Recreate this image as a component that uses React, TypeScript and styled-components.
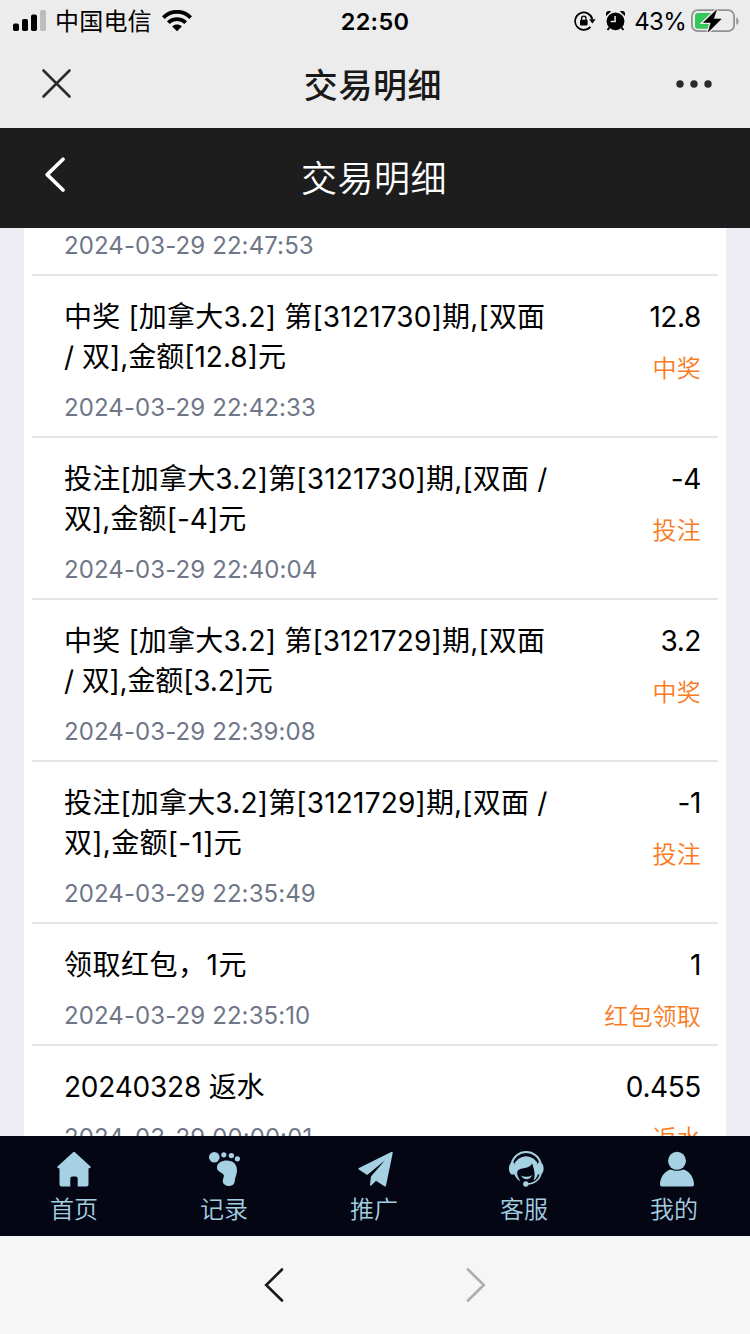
import React from "react";
import styled, { createGlobalStyle } from "styled-components";

const Global = createGlobalStyle`
  * { box-sizing: border-box; }
  body { margin: 0; background: #f6f6f6; }
`;

const Screen = styled.div`
  width: 750px;
  height: 1334px;
  display: flex;
  flex-direction: column;
  overflow: hidden;
  font-family: Inter, "Noto Sans CJK SC", sans-serif;
  background: #f6f6f6;
`;

const StatusBar = styled.header`
  height: 40px;
  flex: none;
  display: grid;
  grid-template-columns: 1fr auto 1fr;
  align-items: center;
  padding: 0 11px 0 13px;
  background: #ececec;
  color: #000;
  font-size: 24px;
`;

const StatusGroup = styled.div<{ $end?: boolean }>`
  display: flex;
  align-items: center;
  justify-content: ${(p) => (p.$end ? "flex-end" : "flex-start")};
  white-space: nowrap;
  svg { display: block; flex: none; }
`;

const Carrier = styled.span`
  margin: 0 10px 0 9px;
  padding-top: 2px;
  line-height: 40px;
  letter-spacing: 0.2px;
`;

const Clock = styled.span`
  margin-right: 2px;
  font-weight: 600;
  font-size: 23.5px;
  line-height: 40px;
  padding-top: 1px;
  letter-spacing: 0.3px;
`;

const StatusIcons = styled.div`
  display: flex;
  align-items: center;
  gap: 10px;
`;

const Percent = styled.span`
  margin: 0 5px 0 9px;
  padding-top: 1px;
  font-size: 24px;
  line-height: 40px;
  letter-spacing: -0.7px;
`;

const TitleBar = styled.div`
  height: 88px;
  flex: none;
  display: flex;
  align-items: center;
  justify-content: space-between;
  padding: 0 38px 1px 41px;
  background: #ececec;
  svg { display: block; }
`;

const WindowTitle = styled.h1`
  margin: 0 2px 0 0;
  padding: 5px 0 0 0;
  font-size: 34px;
  font-weight: 500;
  line-height: 82px;
  letter-spacing: 0.6px;
  color: #191919;
`;

const PageHeader = styled.div`
  height: 100px;
  flex: none;
  display: grid;
  grid-template-columns: 1fr auto 1fr;
  align-items: center;
  padding: 0 44px;
  background: #1d1d1d;
  color: #fff;
  svg { display: block; margin-bottom: 6px; }
`;

const PageTitle = styled.h2`
  margin: 0 2px 0 0;
  padding-top: 2px;
  font-size: 36px;
  font-weight: 350;
  line-height: 96px;
  letter-spacing: 0.5px;
`;

const ListArea = styled.main`
  height: 908px;
  flex: none;
  padding: 0 24px;
  overflow: hidden;
  background: #eeedf3;
`;

const Sheet = styled.div`
  padding: 0 8px;
  background: #fff;
`;

const Record = styled.article<{ $clip?: boolean }>`
  display: flex;
  justify-content: space-between;
  padding: ${(p) => (p.$clip ? "2px 17px 12px 32px" : "21px 17px 11px 32px")};
  border-bottom: 2px solid #e4e5ea;
  white-space: nowrap;
`;

const Side = styled.div<{ $end?: boolean }>`
  display: flex;
  flex-direction: column;
  align-items: ${(p) => (p.$end ? "flex-end" : "flex-start")};
`;

const Line = styled.div<{ $track?: number }>`
  height: 40px;
  font-size: 28px;
  line-height: 40px;
  letter-spacing: ${(p) => p.$track ?? -0.4}px;
  font-weight: 400;
  color: #000;
`;

const Stamp = styled.time<{ $flush?: boolean }>`
  height: ${(p) => (p.$flush ? 32 : 33)}px;
  margin-top: ${(p) => (p.$flush ? 0 : 15)}px;
  font-size: 24px;
  line-height: 32px;
  letter-spacing: 0.1px;
  color: #6e7687;
`;

const Kind = styled.div`
  height: 32px;
  margin-top: 16px;
  font-size: 24px;
  line-height: 32px;
  font-weight: 350;
  letter-spacing: 0.2px;
  color: #f97a21;
`;

const TabBar = styled.nav`
  height: 100px;
  flex: none;
  display: grid;
  grid-template-columns: repeat(5, 1fr);
  background: #050614;
`;

const Tab = styled.div`
  display: flex;
  flex-direction: column;
  align-items: center;
  padding-top: 14px;
  color: #a4cfe0;
  font-size: 24px;
  font-weight: 350;
  line-height: 40px;
  svg { display: block; }
  span { margin-right: 2px; }
`;

const BrowserBar = styled.footer`
  height: 98px;
  flex: none;
  display: flex;
  justify-content: center;
  align-items: center;
  gap: 180px;
  background: #f6f6f6;
`;

type Entry = {
  lines: { text: string; track: number }[];
  date: string;
  amount: string;
  kind: string;
};

const entries: Entry[] = [
  {
    lines: [
      { text: "中奖 [加拿大3.2] 第[3121730]期,[双面", track: 0.19 },
      { text: "/ 双],金额[12.8]元", track: 0 },
    ],
    date: "2024-03-29 22:42:33", amount: "12.8", kind: "中奖",
  },
  {
    lines: [
      { text: "投注[加拿大3.2]第[3121730]期,[双面 /", track: 0.19 },
      { text: "双],金额[-4]元", track: 0.07 },
    ],
    date: "2024-03-29 22:40:04", amount: "-4", kind: "投注",
  },
  {
    lines: [
      { text: "中奖 [加拿大3.2] 第[3121729]期,[双面", track: 0.19 },
      { text: "/ 双],金额[3.2]元", track: -0.15 },
    ],
    date: "2024-03-29 22:39:08", amount: "3.2", kind: "中奖",
  },
  {
    lines: [
      { text: "投注[加拿大3.2]第[3121729]期,[双面 /", track: 0.19 },
      { text: "双],金额[-1]元", track: 0.3 },
    ],
    date: "2024-03-29 22:35:49", amount: "-1", kind: "投注",
  },
  { lines: [{ text: "领取红包，1元", track: 0.5 }], date: "2024-03-29 22:35:10", amount: "1", kind: "红包领取" },
  { lines: [{ text: "20240328 返水", track: -0.22 }], date: "2024-03-29 00:00:01", amount: "0.455", kind: "返水" },
];

const Signal = () => (
  <svg width="33" height="22" viewBox="0 0 33 22">
    <rect x="0" y="13.5" width="6" height="7.5" rx="1.8" />
    <rect x="9" y="9" width="6" height="12" rx="1.8" />
    <rect x="18" y="4.5" width="6" height="16.5" rx="1.8" />
    <rect x="27" y="0" width="6" height="21" rx="1.8" fill="#bdbdbd" />
  </svg>
);

const Wifi = () => (
  <svg width="30" height="22" viewBox="0 0 30 22">
    <g fill="none" stroke="#000" strokeWidth="3.8">
      <path d="M1.3 7.6C9-.1 21-.1 28.7 7.6" />
      <path d="M6.3 12.7C11.2 8 18.8 8 23.7 12.7" />
    </g>
    <path d="M10.2 16.4C13 14 17 14 19.8 16.4L15 21.3Z" />
  </svg>
);

const RotationLock = () => (
  <svg width="22" height="20" viewBox="0 0 22 20">
    <path d="M18.3 8.2A8.7 8.7 0 1 0 16.4 15.9" fill="none" stroke="#000" strokeWidth="1.7" />
    <path d="M15.2 8.2H21.6L18.4 12.6Z" />
    <rect x="6" y="8.7" width="7.6" height="5.7" rx="0.8" />
    <path d="M7.6 9V7.3a2.2 2.2 0 0 1 4.4 0V9" fill="none" stroke="#000" strokeWidth="1.3" />
  </svg>
);

const Alarm = () => (
  <svg width="19" height="20" viewBox="0.5 0 19 20">
    <circle cx="10" cy="10.3" r="8.9" />
    <path d="M0.6 5A3.4 3.4 0 0 1 5.6 0.6ZM19.4 5A3.4 3.4 0 0 0 14.4 0.6Z" />
    <path d="M4 16.5L2 19M16 16.5L18 19" stroke="#000" strokeWidth="2" />
    <path d="M9.6 5V10.6H5.2" fill="none" stroke="#ececec" strokeWidth="1.5" />
  </svg>
);

const Battery = () => (
  <svg width="48" height="24" viewBox="0 0 48 24">
    <rect x="0.9" y="1.2" width="42.2" height="21" rx="6" fill="none" stroke="#929292" strokeWidth="1.8" />
    <path d="M45.3 8.5C48.3 9.5 48.3 14.8 45.3 15.8Z" fill="#929292" />
    <path d="M7 4H20V19.8H7A3 3 0 0 1 4 16.8V7A3 3 0 0 1 7 4Z" fill="#34c759" />
    <path d="M25.5 1L12.5 13.4H20L17.2 23L30.2 10H22.5Z" stroke="#ececec" strokeWidth="3.2" />
    <path d="M25.5 1L12.5 13.4H20L17.2 23L30.2 10H22.5Z" stroke="#000" strokeWidth="0.6" />
  </svg>
);

const Close = () => (
  <svg width="31" height="31" viewBox="0 0 31 31" fill="none" stroke="#2b2b2b" strokeWidth="2.6" strokeLinecap="round">
    <path d="M2.5 2.5L28.5 28.5M28.5 2.5L2.5 28.5" />
  </svg>
);

const More = () => (
  <svg width="36" height="10" viewBox="0 0 36 10" fill="#2b2b2b">
    <circle cx="4" cy="5" r="3.7" />
    <circle cx="18" cy="5" r="3.7" />
    <circle cx="32" cy="5" r="3.7" />
  </svg>
);

const Back = () => (
  <svg width="22" height="36" viewBox="0 0 22 36" fill="none" stroke="#fff" strokeWidth="3.6" strokeLinecap="round" strokeLinejoin="round">
    <path d="M19 2.2L3.2 17.6L19 33" />
  </svg>
);

const Chevron = ({ forward }: { forward?: boolean }) => (
  <svg width="22" height="36" viewBox="0 0 22 36" fill="none" stroke={forward ? "#adadad" : "#191919"} strokeWidth="2.6" strokeLinecap="round">
    <path d={forward ? "M3 2.5L18.8 18L3 33.5" : "M19 2.5L3.2 18L19 33.5"} />
  </svg>
);

const HomeIcon = () => (
  <svg width="40" height="40" viewBox="0.5 0 40 40" fill="#a6d1e3">
    <path d="M18.6 2.2Q19.5 1.3 20.4 2.2L36 16.4Q36.8 18 35 18.2H34V34.6Q34 36.6 32 36.6H23.2V28.5Q23.2 26.4 21.2 26.4H17.8Q15.8 26.4 15.8 28.5V36.6H7Q5 36.6 5 34.6V18.2H4Q2 18 3 16.4Z" />
  </svg>
);

const FootIcon = () => (
  <svg width="40" height="40" viewBox="0 0 40 40" fill="#a6d1e3">
    <circle cx="9.3" cy="7.2" r="5.3" />
    <circle cx="18.8" cy="4.8" r="2.6" />
    <circle cx="26.4" cy="5.6" r="2.7" />
    <circle cx="32.4" cy="8.8" r="2.6" />
    <path d="M12 16.8C12.5 12.6 17 10.5 21.5 10.5C28.5 10.5 32 14.5 32 20.5C32 25 29.7 27.5 29.7 31.5C29 37.6 18.5 37.4 17.8 31.5C17.6 28.5 19.6 26.8 18.6 24.8C17.6 22.8 11.2 21.6 12 16.8Z" />
  </svg>
);

const PlaneIcon = () => (
  <svg width="40" height="40" viewBox="0 0 40 40" fill="#a6d1e3">
    <path d="M37.7 3Q37.8 1.2 36.2 1.9L4 18Q2.6 18.8 3.8 19.6L12.2 25L30 10.2L16 26.5L15 34.6Q15.2 36.6 16.8 35L21 30.8L29.4 36.3Q30.8 36.8 31.1 35.2Z" />
  </svg>
);

const ServiceIcon = () => (
  <svg width="40" height="40" viewBox="0 0 40 40" fill="#a6d1e3">
    <path d="M6.6 13.5A15 15 0 0 1 35.8 13.5" fill="none" stroke="#a6d1e3" strokeWidth="1.9" />
    <path d="M9 15.4A12.6 12.6 0 0 1 33.2 15.4L33 24C32 27.5 30.5 29.5 28.3 30.6C30.2 27 30.2 21.5 27 13.2C25.5 17.4 20.5 17.6 16 18.8C10.8 20.2 11.2 24.5 15.5 31.3C10.5 28.6 8.4 24 8.8 19Z" />
    <path d="M9.4 12.5H6.5Q4 14 4 18.8Q4 23 6.5 24.4H9.4ZM33 12.5H35.7Q38.6 14 38.6 18.8Q38.6 23 35.7 24.4H33Z" />
    <path d="M16 25.6Q21.5 28.2 27.2 25.2Q25 29.2 21.5 29.2Q18 29.2 16 25.6Z" />
    <path d="M36 23.5C34 30.5 28 34.4 21 34.4" fill="none" stroke="#a6d1e3" strokeWidth="1.8" />
    <circle cx="20.8" cy="34" r="2.7" />
  </svg>
);

const UserIcon = () => (
  <svg width="40" height="40" viewBox="0 0 40 40" fill="#a6d1e3">
    <circle cx="22" cy="10.8" r="9" />
    <path d="M15.5 19.5Q22 22 28.5 19.5C35 21.5 39 28 39 34.5Q39 36.6 37 36.6H7Q5 36.6 5 34.5C5 28 9 21.5 15.5 19.5Z" />
  </svg>
);

const tabs = [
  { label: "首页", Icon: HomeIcon },
  { label: "记录", Icon: FootIcon },
  { label: "推广", Icon: PlaneIcon },
  { label: "客服", Icon: ServiceIcon },
  { label: "我的", Icon: UserIcon },
];

export default function App() {
  return (
    <Screen>
      <Global />
      <StatusBar>
        <StatusGroup>
          <Signal />
          <Carrier>中国电信</Carrier>
          <Wifi />
        </StatusGroup>
        <Clock>22:50</Clock>
        <StatusGroup $end>
          <StatusIcons>
            <RotationLock />
            <Alarm />
          </StatusIcons>
          <Percent>43%</Percent>
          <Battery />
        </StatusGroup>
      </StatusBar>
      <TitleBar>
        <Close />
        <WindowTitle>交易明细</WindowTitle>
        <More />
      </TitleBar>
      <PageHeader>
        <Back />
        <PageTitle>交易明细</PageTitle>
      </PageHeader>
      <ListArea>
        <Sheet>
          <Record $clip>
            <Stamp $flush>2024-03-29 22:47:53</Stamp>
          </Record>
          {entries.map((e) => (
            <Record key={e.date}>
              <Side>
                {e.lines.map((l) => (
                  <Line key={l.text} $track={l.track}>{l.text}</Line>
                ))}
                <Stamp>{e.date}</Stamp>
              </Side>
              <Side $end>
                <Line>{e.amount}</Line>
                <Kind>{e.kind}</Kind>
              </Side>
            </Record>
          ))}
        </Sheet>
      </ListArea>
      <TabBar>
        {tabs.map(({ label, Icon }) => (
          <Tab key={label}>
            <Icon />
            <span>{label}</span>
          </Tab>
        ))}
      </TabBar>
      <BrowserBar>
        <Chevron />
        <Chevron forward />
      </BrowserBar>
    </Screen>
  );
}
